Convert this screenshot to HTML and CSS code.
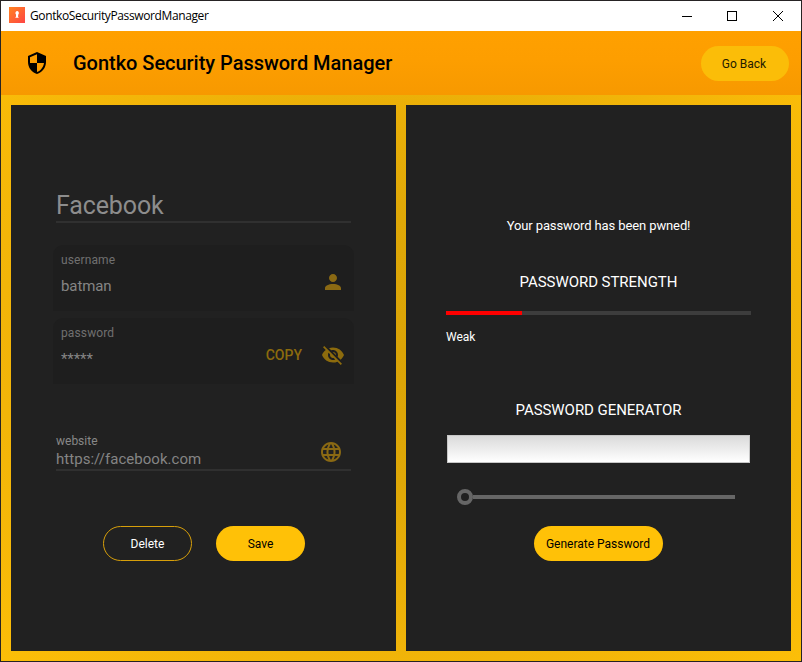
FILE: index.html
```html
<!DOCTYPE html>
<html lang="en">
<head>
<meta charset="utf-8">
<title>GontkoSecurityPasswordManager</title>
<link rel="stylesheet" href="styles.css">
</head>
<body>
<div class="window">
  <div class="titlebar">
    <svg class="app-icon" width="16" height="16" viewBox="0 0 16 16"><defs><linearGradient id="g" x1="0" y1="0" x2="1" y2="1"><stop offset="0" stop-color="#ff8420"/><stop offset="1" stop-color="#ff4545"/></linearGradient></defs><rect width="16" height="16" fill="url(#g)"/><path d="M8 4a2 2 0 0 1 1.300 3.400L9 9.500l.8 1.300H6.200L7 9.500V7.400A2 2 0 0 1 8 4z" fill="#fff"/></svg>
    <span class="caption">GontkoSecurityPasswordManager</span>
    <svg class="controls" width="104" height="12" viewBox="0 0 104 12" fill="none" stroke="#000"><path d="M0 6.500h10" /><rect x="45.500" y="1.500" width="9" height="9"/><path d="M91 1l10 10M101 1L91 11"/></svg>
  </div>
  <header class="appbar">
    <svg class="shield" width="24" height="24" viewBox="0 0 24 24"><path d="M12 1L3 5v6c0 5.550 3.840 10.740 9 12 5.160-1.260 9-6.450 9-12V5l-9-4zm0 10.990h7c-.53 4.120-3.280 7.790-7 8.940V12H5V6.300l7-3.110v8.800z"/></svg>
    <h1>Gontko Security Password Manager</h1>
    <button class="pill back">Go Back</button>
  </header>
  <main>
    <section class="panel entry">
      <div class="name">Facebook</div>
      <div class="card user">
        <div class="label">username</div>
        <div class="value">batman</div>
        <svg class="icon" width="24" height="24" viewBox="0 0 24 24"><path d="M12 12c2.210 0 4-1.790 4-4s-1.790-4-4-4-4 1.790-4 4 1.790 4 4 4zm0 2c-4.420 0-8 1.790-8 4v2h16v-2c0-2.210-3.580-4-8-4z"/></svg>
      </div>
      <div class="card pass">
        <div class="label">password</div>
        <div class="value">*****</div>
        <span class="copy">COPY</span>
        <svg class="icon" width="24" height="24" viewBox="0 0 24 24"><path d="M12 7c2.760 0 5 2.240 5 5 0 .65-.13 1.260-.36 1.830l2.920 2.920c1.510-1.260 2.700-2.890 3.430-4.750-1.730-4.390-6-7.500-11-7.500-1.400 0-2.740.25-3.980.7l2.160 2.160C10.740 7.130 11.350 7 12 7zM2 4.270l2.280 2.280.46.46C3.080 8.300 1.780 10.020 1 12c1.730 4.390 6 7.500 11 7.500 1.550 0 3.030-.3 4.380-.84l.42.42L19.730 22 21 20.730 3.270 3 2 4.270zM7.530 9.800l1.550 1.550c-.05.21-.08.43-.08.65 0 1.660 1.340 3 3 3 .22 0 .44-.03.65-.08l1.550 1.550c-.67.33-1.410.53-2.200.53-2.760 0-5-2.240-5-5 0-.79.2-1.530.53-2.200zm4.310-.78l3.150 3.150.02-.16c0-1.660-1.340-3-3-3l-.17.01z"/></svg>
      </div>
      <div class="site">
        <div class="site-text"><div class="label">website</div><div class="value">https://facebook.com</div></div>
        <svg class="icon" width="24" height="24" viewBox="0 0 24 24"><path d="M11.990 2C6.470 2 2 6.480 2 12s4.470 10 9.990 10C17.520 22 22 17.520 22 12S17.520 2 11.990 2zm6.930 6h-2.950c-.32-1.250-.78-2.450-1.380-3.560 1.840.63 3.370 1.910 4.330 3.560zM12 4.040c.83 1.200 1.480 2.530 1.910 3.960h-3.820c.43-1.430 1.080-2.760 1.910-3.960zM4.260 14C4.100 13.360 4 12.690 4 12s.1-1.360.26-2h3.380c-.08.66-.14 1.320-.14 2 0 .68.06 1.340.14 2H4.260zm.82 2h2.950c.32 1.250.78 2.450 1.380 3.560-1.840-.63-3.370-1.900-4.330-3.560zm2.950-8H5.080c.96-1.660 2.490-2.930 4.330-3.560C8.810 5.550 8.350 6.750 8.030 8zM12 19.960c-.83-1.200-1.480-2.530-1.910-3.960h3.820c-.43 1.430-1.080 2.760-1.910 3.960zM14.340 14H9.660c-.09-.66-.16-1.320-.16-2 0-.68.07-1.350.16-2h4.680c.09.65.16 1.320.16 2 0 .68-.07 1.340-.16 2zm.25 5.560c.6-1.110 1.060-2.310 1.380-3.560h2.950c-.96 1.650-2.490 2.930-4.330 3.560zM16.360 14c.08-.66.14-1.320.14-2 0-.68-.06-1.340-.14-2h3.380c.16.64.26 1.310.26 2s-.1 1.360-.26 2h-3.380z"/></svg>
      </div>
      <div class="actions">
        <button class="pill outline">Delete</button>
        <button class="pill save">Save</button>
      </div>
    </section>
    <section class="panel tools">
      <div class="pwned">Your password has been pwned!</div>
      <h2 class="strength">PASSWORD STRENGTH</h2>
      <div class="meter"><div class="meter-fill"></div></div>
      <div class="rating">Weak</div>
      <h2 class="generator">PASSWORD GENERATOR</h2>
      <div class="output"></div>
      <div class="slider"><div class="knob"></div><div class="track"></div></div>
      <button class="pill generate">Generate Password</button>
    </section>
  </main>
</div>
</body>
</html>
```
FILE: styles.css
```css
* { box-sizing: border-box; }
body { margin: 0; font-family: Roboto, sans-serif; background: #1f1f1f; }
h1, h2 { margin: 0; font-weight: 400; white-space: nowrap; }
.window {
  width: 802px; height: 662px; border: 1px solid #262324;
  display: flex; flex-direction: column;
}
.titlebar { height: 30px; background: #fff; display: flex; align-items: center; padding: 0 15px 0 8px; }
.app-icon { margin-top: -2px; }
.caption { margin-left: 5px; font: 12px/16px "Open Sans", sans-serif; letter-spacing: -0.38px; color: #000; white-space: nowrap; }
.controls { margin: -1px 0 0 auto; width: 104px; }
.appbar {
  height: 64px; display: flex; align-items: center; padding: 0 12px 0 24px;
  background: linear-gradient(#ffa000 0%, #fd9e00 45%, #f79900 100%);
}
.appbar h1 { margin-left: 24px; font-size: 20px; line-height: 24px; font-weight: 500; letter-spacing: -0.03px; color: #000; }
.pill {
  border: 0; border-radius: 18px; height: 35px; padding: 0; font: 12px/16px Roboto, sans-serif;
  background: #ffc107; color: #000; white-space: nowrap;
}
.back { margin-left: auto; width: 88px; padding: 2px 2px 0 0; background: #fbbd08; color: #241b00; }
main {
  height: 566px; display: flex; gap: 10px; padding: 10px;
  background: radial-gradient(ellipse 560px 440px at 50% 45%, #dba406 0%, #dfa807 30%, #f2b509 72%, #fcbe08 100%);
}
.panel { width: 385px; height: 546px; background: #212121; display: flex; flex-direction: column; }
.entry { padding: 82px 0 0 42px; }
.name {
  width: 295px; height: 36px; margin-left: 3px; border-bottom: 2px solid #303030;
  font-size: 25px; line-height: 38px; letter-spacing: -0.12px; color: #8d8d8d;
}
.card {
  width: 301px; height: 66px; padding: 6px 9px 0 8px; border-radius: 10px 10px 0 0; background: #1e1e1e;
  display: grid; grid-template-columns: 1fr auto 24px; grid-template-rows: 18px 34px;
}
.card .label, .card .icon, .card .copy, .card .value { align-self: center; }
.card .icon, .card .copy { margin-bottom: 8px; }
.label { font-size: 12px; line-height: 16px; color: #707070; }
.card .label { grid-column: 1 / 4; letter-spacing: 0.12px; }
.value { font-size: 15px; line-height: 20px; color: #858585; }
.card .value { grid-column: 1; letter-spacing: -0.1px; }
.icon { grid-column: 3; fill: #8a6913; }
.user { margin-top: 22px; }
.pass { margin-top: 7px; }
.pass .icon { fill: #8c6b0d; }
.copy { grid-column: 2; margin-right: 19px; font-size: 14px; line-height: 18px; font-weight: 500; color: #8c6b0d; }
.site {
  width: 295px; height: 38px; margin: 49px 0 0 3px; border-bottom: 2px solid #303030;
  display: flex; justify-content: space-between; padding-right: 8px;
}
.site .label { color: #888; }
.site .value { letter-spacing: 0.04px; }
.site .icon { margin-top: 7px; }
.actions { display: flex; gap: 24px; margin: 55px 0 0 50px; }
.actions .pill { width: 89px; }
.outline { border: 1px solid #d79f0a; background: transparent; color: #fff; }
.tools { padding: 112px 40px 0; color: #fff; }
.pwned { font-size: 13px; line-height: 18px; letter-spacing: -0.11px; text-align: center; }
h2 { font-size: 15px; line-height: 20px; letter-spacing: -0.05px; text-align: center; }
.strength { margin-top: 37px; }
.meter { width: 305px; height: 4px; margin-top: 19px; background: #3d3d3d; }
.meter-fill { width: 76px; height: 4px; background: #f00; }
.rating { margin-top: 14px; font-size: 12px; line-height: 16px; }
.generator { margin-top: 55px; }
.output { height: 28px; margin: 15px 1px 0; border: 1px solid #c7c7c7; background: linear-gradient(#dadada, #fff); }
.slider { display: flex; align-items: center; height: 16px; margin: 26px 0 0 11px; }
.knob { width: 16px; height: 16px; border: 4px solid #666; border-radius: 50%; }
.track { width: 262px; height: 4px; background: #666; }
.generate { width: 129px; margin: 21px auto 0; padding-right: 1px; }
```
